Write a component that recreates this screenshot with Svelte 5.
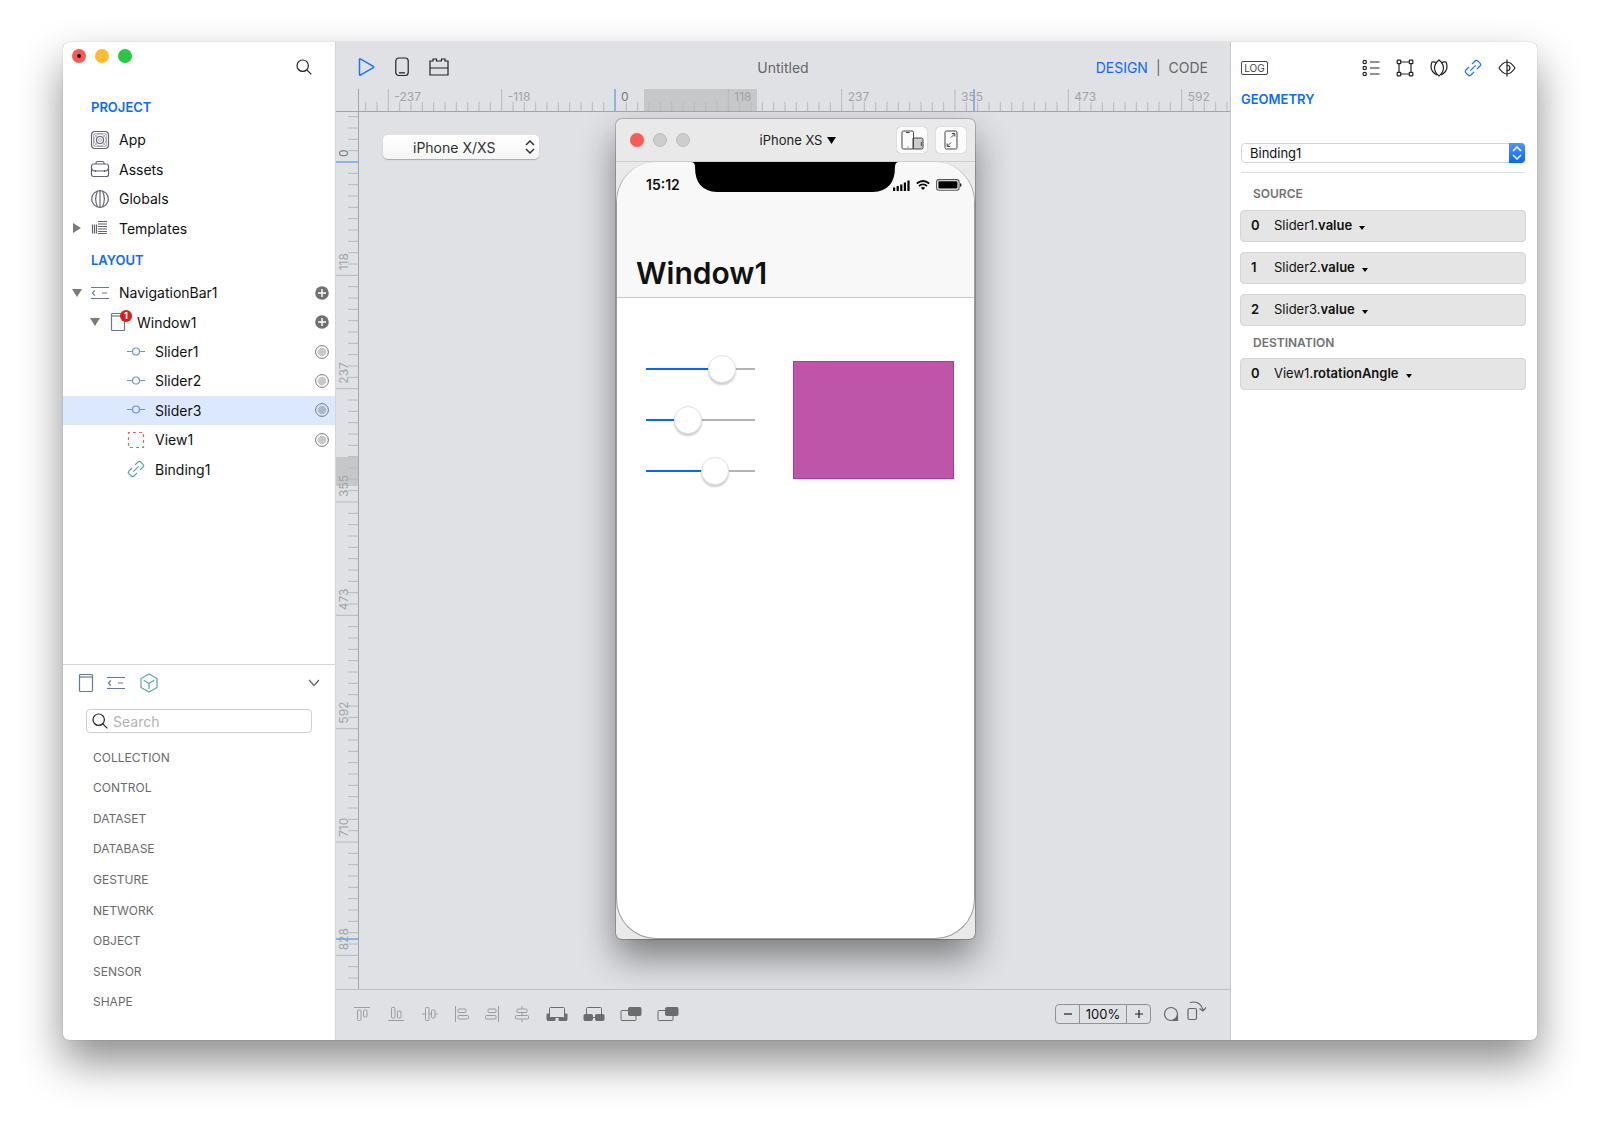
<script lang="ts">
  type Row = { name: string; icon: string; level: number; open?: boolean; toggle?: boolean; action?: string };

  const project: Row[] = [
    { name: 'App', icon: 'app', level: 0 },
    { name: 'Assets', icon: 'assets', level: 0 },
    { name: 'Globals', icon: 'globals', level: 0 },
    { name: 'Templates', icon: 'templates', level: 0, toggle: true }
  ];

  const layout: Row[] = [
    { name: 'NavigationBar1', icon: 'navbar', level: 0, toggle: true, open: true, action: 'add' },
    { name: 'Window1', icon: 'window-alert', level: 1, toggle: true, open: true, action: 'add' },
    { name: 'Slider1', icon: 'slider', level: 2, action: 'dot' },
    { name: 'Slider2', icon: 'slider', level: 2, action: 'dot' },
    { name: 'Slider3', icon: 'slider', level: 2, action: 'dot' },
    { name: 'View1', icon: 'view', level: 2, action: 'dot' },
    { name: 'Binding1', icon: 'binding', level: 2 }
  ];

  const categories = ['COLLECTION', 'CONTROL', 'DATASET', 'DATABASE', 'GESTURE', 'NETWORK', 'OBJECT', 'SENSOR', 'SHAPE'];

  const sources = [
    { object: 'Slider1', property: 'value' },
    { object: 'Slider2', property: 'value' },
    { object: 'Slider3', property: 'value' }
  ];
  const destinations = [{ object: 'View1', property: 'rotationAngle' }];

  let selected = $state('Slider3');
  let query = $state('');
  let sliders = $state([
    { name: 'Slider1', value: 77 },
    { name: 'Slider2', value: 34 },
    { name: 'Slider3', value: 68 }
  ]);

  // Rulers: one major tick every ten minor ones
  const MAJOR = 340 / 3;
  const MINOR = MAJOR / 10;
  const H_ZERO = 256;
  const V_ZERO = 50;
  const labels = [-237, -118, 0, 118, 237, 355, 473, 592, 710, 828, 947, 1065, 1183, 1302, 1420];

  // Only what fits in the workspace is drawn
  let width = $state(0);
  let height = $state(0);
  let hTicks = $derived(Array.from({ length: Math.max(0, Math.floor((width - H_ZERO) / MINOR) + 23) }, (_, i) => i - 22));
  let vTicks = $derived(Array.from({ length: Math.max(0, Math.floor((height - V_ZERO) / MINOR) + 5) }, (_, i) => i - 4));
  let hLabels = $derived(labels.filter((_, i) => H_ZERO + 30 + (i - 2) * MAJOR < width));
  let vLabels = $derived(labels.slice(2).filter((_, i) => V_ZERO + i * MAJOR < height));

  const alignTools = [
    { id: 'top', name: 'Align top' },
    { id: 'bottom', name: 'Align bottom' },
    { id: 'middle', name: 'Align middle' },
    { id: 'left', name: 'Align left' },
    { id: 'right', name: 'Align right' },
    { id: 'center', name: 'Align center' }
  ];
  const orderTools = [
    { id: 'back', name: 'Send to back' },
    { id: 'backward', name: 'Send backward' },
    { id: 'forward', name: 'Bring forward' },
    { id: 'front', name: 'Bring to front' }
  ];
</script>

{#snippet icon(name: string)}
  {#if name === 'app'}
    <svg class="ink" width="20" height="20" viewBox="0 0 20 20">
      <rect x="1.5" y="1.5" width="17" height="17" rx="3.5" />
      <g stroke-width=".5">
        <rect x="3.5" y="3.5" width="13" height="13" rx="2" />
        <circle cx="10" cy="10" r="6" />
        <circle cx="10" cy="10" r="1.5" />
        <path d="M3.5 3.5l4 4M16.5 3.5l-4 4M3.5 16.5l4-4M16.5 16.5l-4-4" />
      </g>
      <circle cx="10" cy="10" r="3.5" />
    </svg>
  {:else if name === 'assets'}
    <svg class="ink" width="20" height="20" viewBox="0 0 20 20">
      <rect x="1.5" y="5" width="17" height="12.5" rx="2" />
      <path d="M6 5V4q0-1.500 1.500-1.500h5Q14 2.500 14 4v1M1.500 9.500q1 2.500 3 2.500h11q2 0 3-2.500M5.500 11v2M14.500 11v2" />
    </svg>
  {:else if name === 'globals'}
    <svg class="ink" width="20" height="20" viewBox="0 0 20 20">
      <circle cx="10" cy="10" r="8.3" />
      <path d="M10 1.700v16.600M7.500 2.200Q3.800 10 7.500 17.800M12.500 2.200Q16.200 10 12.500 17.800" />
    </svg>
  {:else if name === 'templates'}
    <svg class="ink" width="20" height="20" viewBox="0 0 20 20">
      <path d="M2.500 6.500v9M4.500 6.500v9M6.500 6.500v9M8 3.500h9M8 6h9M8 8.500h9M8 11h9M8 13.500h9M8 15.500h9" />
    </svg>
  {:else if name === 'navbar'}
    <svg class="steel" width="20" height="20" viewBox="0 0 20 20">
      <path d="M1 4.500h18M1 15.500h18" />
      <path d="M4.800 7.500L2.500 10l2.300 2.500M12 10h5" />
    </svg>
  {:else if name === 'window'}
    <svg class="steel" width="16" height="20" viewBox="0 0 16 20">
      <rect x="1.5" y="1.5" width="13" height="17" rx="1" />
      <path d="M1.500 4h13" />
    </svg>
  {:else if name === 'window-alert'}
    <span class="alert-icon">
      {@render icon('window')}
      <span class="alert">1</span>
    </span>
  {:else if name === 'slider'}
    <svg class="blue" width="20" height="20" viewBox="0 0 20 20">
      <path d="M1 9.500h5.500M13.500 9.500H19" />
      <circle cx="10" cy="9.5" r="3.5" />
    </svg>
  {:else if name === 'view'}
    <svg class="red" width="20" height="20" viewBox="0 0 20 20">
      <rect x="2.5" y="2.5" width="15" height="15" stroke-dasharray="3 3" stroke-dashoffset="1.5" />
    </svg>
  {:else if name === 'binding'}
    <svg class="link" width="18" height="18" viewBox="0 0 18 18">
      <path d="M8 5l3-3a2 2 0 0 1 2.800 0L16 4.200A2 2 0 0 1 16 7l-3 3M5 8l-3 3a2 2 0 0 0 0 2.800L4.200 16A2 2 0 0 0 7 16l3-3M6.300 11.700l5.400-5.400" />
    </svg>
  {:else if name === 'search'}
    <svg class="black" width="16" height="16" viewBox="0 0 16 16">
      <circle cx="6.7" cy="6.7" r="5.7" />
      <path d="M10.800 10.800l4.500 4.500" />
    </svg>
  {:else if name === 'updown'}
    <svg class="updown" width="10" height="14" viewBox="0 0 10 14">
      <path d="M1 5l4-4 4 4M1 9l4 4 4-4" />
    </svg>
  {/if}
{/snippet}

{#snippet tree(rows: Row[])}
  {#each rows as row (row.name)}
    <li class:selected={selected === row.name}>
      <button class="row" style="padding-left: {5 + row.level * 18}px" onclick={() => (selected = row.name)}>
        <span class="twist">
          {#if row.toggle}
            <svg width="10" height="10" viewBox="0 0 10 10"><path d={row.open ? 'M0 1h10L5 9z' : 'M1 0v10l8-5z'} fill="#7b7b7b" /></svg>
          {/if}
        </span>
        <span class="row-icon">{@render icon(row.icon)}</span>
        <span>{row.name}</span>
      </button>
      {#if row.action === 'add'}
        <button class="action" aria-label="Add to {row.name}">
          <svg width="14" height="14" viewBox="0 0 14 14">
            <circle cx="7" cy="7" r="6.8" fill="#717171" />
            <path d="M7 3v8M3 7h8" stroke="#fff" stroke-width="1.4" />
          </svg>
        </button>
      {:else if row.action === 'dot'}
        <button class="action" aria-label="Toggle {row.name}">
          <svg width="14" height="14" viewBox="0 0 14 14">
            <circle cx="7" cy="7" r="6.4" fill="none" stroke="#777" />
            <circle cx="7" cy="7" r="4.3" fill={selected === row.name ? '#a9bccc' : '#c8c8c8'} />
          </svg>
        </button>
      {/if}
    </li>
  {/each}
{/snippet}

{#snippet bindings(items: { object: string; property: string }[])}
  {#each items as item, i}
    <button class="bind">
      <b class="index">{i}</b>
      <span>{item.object}.<b>{item.property}</b></span>
      <svg width="6" height="4" viewBox="0 0 6 4"><path d="M0 0h6L3 4z" /></svg>
    </button>
  {/each}
{/snippet}

<div class="desktop">
  <div class="window">
    <aside class="sidebar">
      <header>
        <div class="lights">
          <button class="light close" aria-label="Close"><i></i></button>
          <button class="light minimize" aria-label="Minimize"></button>
          <button class="light zoom" aria-label="Zoom"></button>
        </div>
        <button class="find" aria-label="Find">{@render icon('search')}</button>
      </header>

      <h2>PROJECT</h2>
      <ul class="tree project">{@render tree(project)}</ul>
      <h2>LAYOUT</h2>
      <ul class="tree layout">{@render tree(layout)}</ul>

      <section class="palette">
        <div class="tabs">
          <button aria-label="Windows">{@render icon('window')}</button>
          <button aria-label="Navigation">{@render icon('navbar')}</button>
          <button aria-label="Objects">
            <svg class="teal" width="18" height="20" viewBox="0 0 18 20">
              <path d="M9 1l8 4.500v9L9 19l-8-4.500v-9zM9 10v6M9 10.500L3.800 7.200M9 10.500l5.200-3.300" />
            </svg>
          </button>
          <button class="collapse" aria-label="Collapse">
            <svg class="grey" width="12" height="8" viewBox="0 0 12 8"><path d="M1 1l5 5.500L11 1" /></svg>
          </button>
        </div>
        <label class="search">
          {@render icon('search')}
          <input type="text" placeholder="Search" aria-label="Search" bind:value={query} />
        </label>
        <ul class="categories">
          {#each categories as category}
            <li>{category}</li>
          {/each}
        </ul>
      </section>
    </aside>

    <main>
      <header class="toolbar">
        <div class="tools">
          <button aria-label="Run">
            <svg class="accent" width="17" height="20" viewBox="0 0 17 20"><path d="M1.500 2.300v15.400q0 .8.800.4L15.300 10.600q.7-.6 0-1.200L2.300 1.900q-.8-.4-.8.400z" /></svg>
          </button>
          <button aria-label="Device">
            <svg class="black" width="14" height="20" viewBox="0 0 14 20"><rect x=".8" y="1" width="12.4" height="17.5" rx="3" /><path d="M4 15.800h6" /></svg>
          </button>
          <button aria-label="Plugins">
            <svg class="black" width="20" height="20" viewBox="0 0 20 20"><path d="M1 18V4h3V2h3.500v2h5V2H16v2h3v14zM1 11h18" /></svg>
          </button>
        </div>
        <h1>Untitled</h1>
        <div class="modes">
          <button class="on">DESIGN</button>
          <span>|</span>
          <button>CODE</button>
        </div>
      </header>

      <div class="stage">
        <div class="corner"></div>
        <svg class="ruler h" width="100%" height="23">
          <rect x="285" y="0" width="113" height="22" fill="#c6c7c9" />
          {#each hTicks as t}
            <line
              x1={H_ZERO + t * MINOR}
              x2={H_ZERO + t * MINOR}
              y1={t % 10 === 0 ? 0 : 13}
              y2="22"
              class:zero={t === 0}
            />
          {/each}
          {#each hLabels as label, i}
            <text x={H_ZERO + 6 + (i - 2) * MAJOR} y="12" class:dark={label === 0}>{label}</text>
          {/each}
          <line class="zero" x1="615" x2="615" y1="0" y2="22" />
          <path d="M0 22.500h4000" stroke="#a3a4a7" />
        </svg>
        <svg class="ruler v" width="23" height="100%">
          <rect x="0" y="345" width="22" height="29" fill="#c6c7c9" />
          {#each vTicks as t}
            <line
              x1={t % 10 === 0 ? 0 : 12}
              x2="22"
              y1={V_ZERO + t * MINOR}
              y2={V_ZERO + t * MINOR}
              class:zero={t === 0}
            />
          {/each}
          {#each vLabels as label, i}
            <text transform="translate(12 {V_ZERO - 5 + i * MAJOR}) rotate(-90)" class:dark={label === 0}>{label}</text>
          {/each}
          <line class="zero" x1="0" x2="22" y1="827" y2="827" />
          <path d="M22.500 0v4000" stroke="#a3a4a7" />
        </svg>

        <div class="workspace" bind:clientWidth={width} bind:clientHeight={height}>
          <div class="device">
            <select aria-label="Device">
              <option>iPhone X/XS</option>
              <option>iPhone 8</option>
            </select>
            {@render icon('updown')}
          </div>

          <div class="phone">
            <header>
              <div class="lights">
                <button class="light close" aria-label="Close preview"></button>
                <span class="light off"></span>
                <span class="light off"></span>
              </div>
              <button class="model">
                iPhone XS
                <svg width="9" height="7" viewBox="0 0 9 7"><path d="M0 0h9L4.500 7z" /></svg>
              </button>
              <div class="phone-tools">
                <button aria-label="Rotate">
                  <svg class="thin" width="23" height="20" viewBox="0 0 23 20">
                    <path d="M12 8h8.500q1.500 0 1.500 1.500v8q0 1.500-1.500 1.500H12z" fill="#ccc" />
                    <rect x="1" y="1" width="11.5" height="18" rx="1.5" />
                    <path d="M5 2.500h3.500M6.500 17h1M20.300 12v4" />
                  </svg>
                </button>
                <button aria-label="Fit">
                  <svg class="thin" width="14" height="20" viewBox="0 0 14 20">
                    <rect x="1" y="1" width="12" height="18" rx="1.5" />
                    <path d="M7 7.500l3.500-3.500M7.800 3.500h3v3M7 12.500L3.500 16M3.200 13.500v3h3" />
                  </svg>
                </button>
              </div>
            </header>
            <div class="bezel">
              <div class="screen">
                <div class="navbar">
                  <div class="status">
                    <span>15:12</span>
                    <svg class="signal" width="17" height="11" viewBox="0 0 17 11">
                      <path d="M0 7.500h2.200V11H0zM3.600 6h2.200v5H3.600zM7.200 4.500h2.200V11H7.200zM10.800 2.500H13V11h-2.200zM14.400 0.500h2.200V11h-2.200z" />
                    </svg>
                    <svg class="wifi" width="14" height="10" viewBox="0 0 14 10">
                      <path d="M.8 3.500q6.200-5 12.400 0M3 6q4-3.200 8 0" fill="none" stroke="#000" stroke-width="1.8" />
                      <path d="M4.800 7.800q2.200-1.600 4.400 0L7 10z" />
                    </svg>
                    <svg width="26" height="12" viewBox="0 0 26 12">
                      <rect x=".6" y=".6" width="22.5" height="10.6" rx="2.5" fill="none" stroke="#555" stroke-width="1.1" />
                      <rect x="2.4" y="2.3" width="19" height="7.2" rx="1" />
                      <path d="M24.200 4q1.300.4 1.300 2t-1.300 2z" />
                    </svg>
                  </div>
                  <svg class="notch" width="208" height="30" viewBox="0 0 208 30">
                    <path d="M0 0h208q-4 0-4 5 0 24-22 25H26Q4 29 4 5q0-5-4-5z" />
                  </svg>
                  <h3>Window1</h3>
                </div>
                <div class="content">
                  <div class="sliders">
                    {#each sliders as slider}
                      <input
                        type="range"
                        aria-label={slider.name}
                        bind:value={slider.value}
                        style="--fill: {slider.value}%"
                      />
                    {/each}
                  </div>
                  <div class="view"></div>
                </div>
              </div>
            </div>
          </div>
        </div>
      </div>

      <footer>
        <div class="align">
          {#each alignTools as tool, i}
            <button class:wide={i < 3} aria-label={tool.name}>
              <svg width="16" height="16" viewBox="0 0 16 16">
                {#if tool.id === 'top'}
                  <path d="M0 1.500h16" /><rect x="3.5" y="4" width="3.5" height="10.5" rx="1" /><rect x="9.5" y="4" width="3.5" height="7" rx="1" />
                {:else if tool.id === 'bottom'}
                  <path d="M0 14.500h16" /><rect x="3.5" y="1.5" width="3.5" height="10.5" rx="1" /><rect x="9.5" y="5" width="3.5" height="7" rx="1" />
                {:else if tool.id === 'middle'}
                  <path d="M0 8h3.500M7 8h2.500M13 8h3" /><rect x="3.5" y="1.5" width="3.5" height="13" rx="1" /><rect x="9.5" y="4" width="3.5" height="8" rx="1" />
                {:else if tool.id === 'left'}
                  <path d="M1.500 0v16" /><rect x="4" y="3" width="8" height="3.5" rx="1" /><rect x="4" y="9.5" width="10.5" height="3.5" rx="1" />
                {:else if tool.id === 'right'}
                  <path d="M14.500 0v16" /><rect x="4" y="3" width="8" height="3.5" rx="1" /><rect x="1.5" y="9.5" width="10.5" height="3.5" rx="1" />
                {:else}
                  <path d="M8 0v3M8 6.500v3M8 13v3" /><rect x="3" y="3" width="10" height="3.5" rx="1" /><rect x="1.5" y="9.5" width="13" height="3.5" rx="1" />
                {/if}
              </svg>
            </button>
          {/each}
        </div>
        <div class="order">
          {#each orderTools as tool}
            <button aria-label={tool.name}>
              <svg width="22" height="16" viewBox="0 0 22 16">
                {#if tool.id === 'back'}
                  <path d="M1 8h8v6.500H2q-1 0-1-1zM13 8h8v5.500q0 1-1 1h-7z" class="solid" />
                  <rect x="3.5" y="1.5" width="15" height="10" rx="1" fill="#e0e1e5" />
                {:else if tool.id === 'backward'}
                  <rect x="3.5" y="1.5" width="15" height="10" rx="1" />
                  <rect x="1" y="8.5" width="8.5" height="6" rx="1" class="solid" /><rect x="12.5" y="8.5" width="8.5" height="6" rx="1" class="solid" />
                {:else}
                  <rect x="1" y="4.5" width="15" height="10" rx="1" />
                  <rect x="8.5" y="1.5" width="12.5" height="8" rx="1" class="solid" />
                {/if}
              </svg>
            </button>
          {/each}
        </div>
        <div class="zoom-box">
          <button aria-label="Zoom out"><svg width="10" height="10" viewBox="0 0 10 10"><path d="M1 5h8" /></svg></button>
          <output>100%</output>
          <button aria-label="Zoom in"><svg width="10" height="10" viewBox="0 0 10 10"><path d="M1 5h8M5 1v8" /></svg></button>
        </div>
        <button class="foot-icon" aria-label="Appearance">
          <svg class="grey" width="16" height="16" viewBox="0 0 16 16">
            <circle cx="8" cy="8" r="6.5" />
            <path d="M14.500 9.500v5h-5q4-1.200 5-5z" fill="#666" />
          </svg>
        </button>
        <button class="foot-icon" aria-label="Rotate device">
          <svg class="grey" width="20" height="22" viewBox="0 0 20 22">
            <rect x="1" y="8.5" width="8.5" height="11" rx="1.5" />
            <path d="M3 2.500Q13 0 16 10M12.500 8.500L16 11l3-3.500" />
          </svg>
        </button>
      </footer>
    </main>

    <aside class="inspector">
      <header>
        <button class="log">LOG</button>
        <div class="panels">
          <button aria-label="Properties">
            <svg class="black" width="18" height="18" viewBox="0 0 18 18">
              <circle cx="2.7" cy="3" r="1.7" /><circle cx="2.7" cy="9" r="1.7" /><circle cx="2.7" cy="15" r="1.7" />
              <path d="M8 3h9.500M8 9h9.500M8 15h9.500" />
            </svg>
          </button>
          <button aria-label="Geometry">
            <svg class="black" width="18" height="18" viewBox="0 0 18 18">
              <path d="M4.500 3h9M4.500 15h9M3 4.500v9M15 4.500v9" />
              <rect x="1.2" y="1.2" width="3.5" height="3.5" rx=".5" /><rect x="13.3" y="1.2" width="3.5" height="3.5" rx=".5" />
              <rect x="1.2" y="13.3" width="3.5" height="3.5" rx=".5" /><rect x="13.3" y="13.3" width="3.5" height="3.5" rx=".5" />
            </svg>
          </button>
          <button aria-label="Style">
            <svg class="black" width="18" height="18" viewBox="1 0 18 18">
              <path d="M10 1q-4.500 3.800-4.500 8T10 17q4.500-3.800 4.500-8T10 1z" />
              <path d="M7 3.500q-1.700-1-4-.5-3.500 8.500 5 13M13 3.500q1.700-1 4-.5 3.500 8.500-5 13" />
            </svg>
          </button>
          <button class="on" aria-label="Bindings">{@render icon('binding')}</button>
          <button aria-label="Preview">
            <svg class="black" width="18" height="18" viewBox="0 0 18 18">
              <path d="M1 9q8-12 16 0-8 12-16 0zM9 .5v17M9 6q3 .6 3 3t-3 3" />
            </svg>
          </button>
        </div>
      </header>
      <h2>GEOMETRY</h2>
      <div class="picker">
        <select aria-label="Binding">
          <option>Binding1</option>
        </select>
        <span class="knob">{@render icon('updown')}</span>
      </div>
      <h4>SOURCE</h4>
      <div class="bind-list">{@render bindings(sources)}</div>
      <h4 class="second">DESTINATION</h4>
      <div class="bind-list">{@render bindings(destinations)}</div>
    </aside>
  </div>
</div>

<style>
  :global(body) {
    background: #fff;
  }
  .desktop, .desktop :global(*) {
    box-sizing: border-box;
  }
  .desktop {
    min-height: 100vh;
    padding: 42px 63px 84px;
    display: flex;
    font-family: Inter, "Liberation Sans", sans-serif;
    font-size: 13px;
    color: #111;
  }
  .window {
    flex: 1;
    display: grid;
    grid-template-columns: 273px minmax(0, 1fr) 307px;
    border-radius: 6px;
    overflow: hidden;
    background: #fff;
    box-shadow: 0 0 1px rgba(0,0,0,0.4), 0 22px 44px rgba(0,0,0,0.45);
  }
  button {
    border: 0;
    padding: 0;
    margin: 0;
    background: none;
    font: inherit;
    color: inherit;
    cursor: pointer;
  }
  svg {
    display: block;
    flex-shrink: 0;
  }
  ul {
    list-style: none;
    margin: 0;
    padding: 0;
  }
  h1, h2, h3, h4 {
    margin: 0;
  }
  .ink, .steel, .blue, .red, .link, .teal, .black, .grey, .accent, .thin {
    fill: none;
    stroke-width: 1.2;
  }
  .ink { stroke: #666273; }
  .steel { stroke: #64799c; }
  .blue { stroke: #6f95d0; }
  .red { stroke: #e8696b; }
  .link { stroke: #5ba9a2; }
  .teal { stroke: #58a8a4; }
  .black { stroke: #222; }
  .grey { stroke: #666; }
  .accent { stroke: #1a75ff; stroke-width: 1.5; }
  .thin { stroke: #444; stroke-width: 1; }

  .lights {
    display: flex;
    gap: 9px;
  }
  .light {
    width: 14px;
    height: 14px;
    border-radius: 50%;
    display: flex;
    align-items: center;
    justify-content: center;
  }
  .close { background: #fc5b54; }
  .close i {
    width: 4px;
    height: 4px;
    border-radius: 50%;
    background: #1a0000;
  }
  .minimize { background: #fdbb2e; }
  .zoom { background: #28c840; }
  .off {
    background: #cdcdcd;
    border: 1px solid #bdbdbd;
  }

  .sidebar {
    display: flex;
    flex-direction: column;
    border-right: 1px solid #d5d6d9;
  }
  .sidebar > header {
    display: flex;
    justify-content: space-between;
    align-items: flex-start;
    height: 48px;
    padding: 7px 23px 0 9px;
  }
  .find {
    margin-top: 10px;
  }
  .sidebar h2 {
    font-size: 13px;
    line-height: 29px;
    font-weight: 600;
    color: #0a6cff;
    margin: 3px 0 3px 28px;
  }
  .tree {
    display: flex;
    flex-direction: column;
  }
  .project { height: 118px; }
  .layout { height: 206px; }
  .tree li {
    flex: 1;
    display: flex;
    align-items: center;
    padding-right: 6px;
  }
  .tree li.selected {
    background: #dbe8fd;
  }
  .row {
    flex: 1;
    height: 100%;
    display: flex;
    align-items: center;
    font-size: 14px;
    text-align: left;
  }
  .twist {
    width: 18px;
    display: flex;
    justify-content: center;
  }
  .row-icon {
    width: 28px;
    margin-right: 5px;
    display: flex;
    justify-content: center;
  }
  .alert-icon {
    position: relative;
  }
  .alert {
    position: absolute;
    top: -2px;
    right: -6px;
    width: 12px;
    height: 12px;
    border-radius: 50%;
    background: #e31b1b;
    color: #fff;
    font-size: 9px;
    line-height: 12px;
    font-weight: 700;
    text-align: center;
  }

  .palette {
    margin-top: auto;
    height: 376px;
    border-top: 1px solid #d6d6d6;
  }
  .tabs {
    display: flex;
    align-items: center;
    height: 36px;
    padding: 0 15px;
  }
  .tabs button {
    margin-right: 12px;
  }
  .tabs button:nth-child(2) {
    margin-right: 14px;
  }
  .tabs .collapse {
    margin: 0 0 0 auto;
  }
  .search {
    display: flex;
    align-items: center;
    gap: 5px;
    height: 24px;
    margin: 8px 23px 9px;
    padding: 0 5px;
    border: 1px solid #cfcfcf;
    border-radius: 4px;
  }
  .search input {
    flex: 1;
    min-width: 0;
    border: 0;
    outline: 0;
    padding: 0;
    background: none;
    font: inherit;
    font-size: 14px;
  }
  .search input::placeholder {
    color: #b3b3b3;
  }
  .categories {
    display: flex;
    flex-direction: column;
    height: 275px;
    padding-left: 30px;
    font-size: 12px;
    color: #6a6a6a;
  }
  .categories li {
    flex: 1;
    display: flex;
    align-items: center;
  }

  main {
    display: flex;
    flex-direction: column;
    background: #e0e1e5;
  }
  .toolbar {
    display: grid;
    grid-template-columns: 1fr auto 1fr;
    align-items: center;
    height: 47px;
    padding: 3px 22px 0;
    color: #666;
    font-size: 14px;
  }
  .tools {
    display: flex;
    gap: 20px;
  }
  .toolbar h1 {
    font-size: 14px;
    font-weight: 400;
  }
  .modes {
    display: flex;
    justify-content: flex-end;
    gap: 8px;
  }
  .modes .on {
    color: #0a6cff;
  }

  .stage {
    flex: 1;
    min-height: 0;
    display: grid;
    grid-template-columns: 23px minmax(0, 1fr);
    grid-template-rows: 23px minmax(0, 1fr);
  }
  .corner {
    border-right: 1px solid #a3a4a7;
    border-bottom: 1px solid #a3a4a7;
  }
  .ruler {
    overflow: hidden;
  }
  .ruler line {
    stroke: #b9babd;
  }
  .ruler line.zero {
    stroke: #76a0e4;
    stroke-width: 1.5;
  }
  .ruler text {
    font-size: 12px;
    fill: #a3a3a5;
  }
  .ruler text.dark {
    fill: #777;
  }
  .v {
    height: 100%;
  }
  .workspace {
    display: flex;
    align-items: flex-start;
    padding: 7px 0 0 24px;
    overflow: hidden;
  }
  .device {
    position: relative;
    margin: 16px 77px 0 0;
    width: 156px;
  }
  .device select {
    appearance: none;
    width: 100%;
    height: 24px;
    padding: 0 0 0 30px;
    border: 0;
    border-radius: 5px;
    background: linear-gradient(#fff, #f5f5f5);
    box-shadow: 0 1px 1px rgba(0,0,0,0.25);
    font: inherit;
    font-size: 14px;
    color: #333;
  }
  .device :global(.updown) {
    position: absolute;
    right: 4px;
    top: 5px;
    pointer-events: none;
  }
  .updown {
    fill: none;
    stroke: #333;
    stroke-width: 1.5;
  }

  .phone {
    flex-shrink: 0;
    width: 359px;
    border-radius: 6px;
    background: #e9e9e9;
    box-shadow: 0 0 0 1px rgba(0,0,0,0.2), 0 18px 36px rgba(0,0,0,0.45);
  }
  .phone > header {
    display: grid;
    grid-template-columns: 1fr auto 1fr;
    align-items: center;
    height: 43px;
    padding: 0 9px 0 14px;
    border-bottom: 1px solid #cfcfcf;
  }
  .model {
    display: flex;
    align-items: center;
    gap: 5px;
    font-size: 13px;
    color: #222;
  }
  .phone-tools {
    display: flex;
    justify-content: flex-end;
    gap: 9px;
  }
  .phone-tools button {
    width: 30px;
    height: 26px;
    border-radius: 4px;
    background: #fbfbfb;
    box-shadow: 0 0 1px rgba(0,0,0,0.4);
    display: flex;
    align-items: center;
    justify-content: center;
  }
  .bezel {
    aspect-ratio: 375 / 812;
  }
  .screen {
    height: 100%;
    border: 1px solid #9b9b9b;
    border-top: 0;
    border-radius: 40px;
    background: #fff;
    overflow: hidden;
  }
  .navbar {
    position: relative;
    height: 136px;
    background: #f8f8f8;
    border-bottom: 1px solid #c8c8c8;
  }
  .notch {
    position: absolute;
    top: 0;
    left: 74px;
  }
  .status {
    display: flex;
    align-items: center;
    padding: 14px 12px 0 29px;
    font-size: 14px;
    line-height: 18px;
    font-weight: 600;
  }
  .signal {
    margin-left: auto;
  }
  .wifi {
    margin: 0 6px;
  }
  .navbar h3 {
    position: absolute;
    left: 19px;
    bottom: 4px;
    font-size: 30px;
    line-height: 40px;
    font-weight: 600;
  }
  .content {
    display: flex;
    justify-content: space-between;
    padding: 57px 20px 0 29px;
  }
  .sliders {
    display: flex;
    flex-direction: column;
    gap: 23px;
  }
  .sliders input {
    appearance: none;
    display: block;
    width: 109px;
    height: 28px;
    margin: 0;
    background: none;
  }
  .sliders input::-webkit-slider-runnable-track {
    height: 2px;
    background: linear-gradient(to right, #0a64ff var(--fill), #b4b4b4 var(--fill));
  }
  .sliders input::-webkit-slider-thumb {
    appearance: none;
    width: 28px;
    height: 28px;
    margin-top: -13px;
    border: 1px solid #e2e2e2;
    border-radius: 50%;
    background: #fff;
    box-shadow: 0 2px 2px rgba(0,0,0,0.2);
  }
  .view {
    width: 161px;
    height: 118px;
    margin-top: 6px;
    background: #be55a8;
    border: 1px solid #b8349e;
  }

  footer {
    display: flex;
    align-items: center;
    height: 51px;
    padding: 0 23px 2px 17px;
    border-top: 1px solid #bfc0c3;
  }
  .align {
    display: flex;
    gap: 16px;
  }
  .align button {
    width: 14px;
    display: flex;
    justify-content: center;
  }
  .align .wide {
    width: 18px;
  }
  .align svg {
    fill: none;
    stroke: #9c9da0;
  }
  .order {
    display: flex;
    gap: 15px;
    margin-left: 17px;
  }
  .order svg {
    fill: none;
    stroke: #6b6c6e;
  }
  .order .solid {
    fill: #6b6c6e;
  }
  .zoom-box {
    display: flex;
    height: 20px;
    margin: 0 12px 0 auto;
    border: 1px solid #929395;
    border-radius: 4px;
    font-size: 13px;
    line-height: 18px;
  }
  .zoom-box button {
    width: 23px;
    display: flex;
    align-items: center;
    justify-content: center;
  }
  .zoom-box svg {
    stroke: #222;
    stroke-width: 1.2;
  }
  .zoom-box output {
    width: 48px;
    text-align: center;
    border: solid #929395;
    border-width: 0 1px;
  }
  .foot-icon:last-child {
    margin: -6px 0 0 8px;
  }

  .inspector {
    padding: 0 11px 0 9px;
    border-left: 1px solid #c6c7ca;
  }
  .inspector > header {
    display: flex;
    align-items: center;
    justify-content: space-between;
    height: 42px;
    padding: 9px 10px 0 1px;
  }
  .log {
    height: 14px;
    width: 27px;
    border: 1px solid #444;
    border-radius: 2px;
    font-size: 10px;
    line-height: 12px;
    color: #444;
  }
  .panels {
    display: flex;
    gap: 16px;
  }
  .panels .on :global(.link) {
    stroke: #1a75ff;
  }
  .inspector h2 {
    padding-left: 1px;
    font-size: 13px;
    line-height: 30px;
    font-weight: 600;
    color: #0a6cff;
  }
  .picker {
    position: relative;
    margin: 29px 1px 0;
    padding-bottom: 9px;
    border-bottom: 1px solid #dcdcdc;
  }
  .picker select {
    appearance: none;
    display: block;
    width: 100%;
    height: 20px;
    padding: 0 0 0 8px;
    border: 1px solid #d5d5d5;
    border-radius: 4px;
    background: #fff;
    font: inherit;
    color: #111;
  }
  .knob {
    position: absolute;
    top: 0;
    right: 0;
    width: 16px;
    height: 20px;
    border-radius: 0 4px 4px 0;
    background: linear-gradient(#4d95ff, #0a66ff);
    display: flex;
    align-items: center;
    justify-content: center;
    pointer-events: none;
  }
  .knob :global(.updown) {
    stroke: #fff;
  }
  h4 {
    padding: 13px 0 8px 13px;
    font-size: 12px;
    line-height: 16px;
    font-weight: 600;
    color: #727272;
  }
  h4.second {
    padding-top: 9px;
    padding-bottom: 7px;
  }
  .bind-list {
    display: flex;
    flex-direction: column;
    gap: 10px;
  }
  .bind {
    display: flex;
    align-items: center;
    height: 32px;
    padding: 0 10px 2px;
    border: 1px solid #d6d6d6;
    border-radius: 4px;
    background: #e5e5e5;
  }
  .bind b {
    font-weight: 600;
  }
  .bind .index {
    width: 23px;
    text-align: left;
  }
  .bind svg {
    margin: 5px 0 0 7px;
  }
</style>
